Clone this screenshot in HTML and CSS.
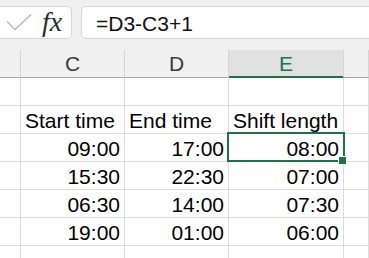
FILE: index.html
```html
<!DOCTYPE html>
<html lang="en">
<head>
    <meta charset="UTF-8">
    <meta name="viewport" content="width=device-width, initial-scale=1.0">
    <title>Shift length</title>
    <link rel="stylesheet" href="styles.css">
</head>
<body>

    <!-- Formula bar -->
    <div class="toolbar">
        <div class="fx-box">
            <svg class="check" width="28" height="20" viewBox="0 0 28 20">
                <path d="M1 7.5 L9 15.5 L25 0.5" fill="none" stroke="#b8b8b8" stroke-width="1.4"/>
            </svg>
            <span class="fx">fx</span>
        </div>
        <div class="formula">=D3-C3+1</div>
    </div>

    <!-- Sheet -->
    <div class="sheet">
        <div class="head"></div>
        <div class="head">C</div>
        <div class="head">D</div>
        <div class="head active">E</div>
        <div class="head"></div>

        <div class="cell"></div><div class="cell"></div><div class="cell"></div><div class="cell"></div><div class="cell"></div>

        <div class="cell"></div>
        <div class="cell">Start time</div>
        <div class="cell">End time</div>
        <div class="cell">Shift length</div>
        <div class="cell"></div>

        <div class="cell"></div>
        <div class="cell num">09:00</div>
        <div class="cell num">17:00</div>
        <div class="cell num selected">08:00</div>
        <div class="cell"></div>

        <div class="cell"></div>
        <div class="cell num">15:30</div>
        <div class="cell num">22:30</div>
        <div class="cell num">07:00</div>
        <div class="cell"></div>

        <div class="cell"></div>
        <div class="cell num">06:30</div>
        <div class="cell num">14:00</div>
        <div class="cell num">07:30</div>
        <div class="cell"></div>

        <div class="cell"></div>
        <div class="cell num">19:00</div>
        <div class="cell num">01:00</div>
        <div class="cell num">06:00</div>
        <div class="cell"></div>

        <div class="cell last"></div><div class="cell last"></div><div class="cell last"></div><div class="cell last"></div><div class="cell last"></div>
    </div>

</body>
</html>
```

FILE: styles.css
```css
/* Global */
* {
    margin: 0;
    padding: 0;
    box-sizing: border-box;
}

body {
    width: 369px;
    height: 258px;
    overflow: hidden;
    background: #fff;
    font-family: "Liberation Sans", Arial, sans-serif;
    font-size: 21px;
    color: #000;
}

/* Formula bar */
.toolbar {
    height: 50px;
    background: #f0f0f0;
    display: flex;
    padding-top: 6px;
    gap: 9px;
}

.fx-box {
    width: 82px;
    height: 33px;
    margin-left: -10px;
    background: #fff;
    border: 1px solid #d6d6d6;
    border-radius: 5px;
    display: flex;
    align-items: center;
    padding-left: 15px;
}

.check {
    margin-top: 2px;
}

.fx {
    font-family: "Liberation Serif", "DejaVu Serif", serif;
    font-style: italic;
    font-size: 28px;
    line-height: 28px;
    color: #2b2b2b;
    margin-left: 8px;
    margin-top: -2px;
}

.formula {
    flex: 1;
    height: 33px;
    margin-right: -10px;
    background: #fff;
    border: 1px solid #d6d6d6;
    border-radius: 5px;
    padding: 5px 0 0 14px;
    line-height: 24px;
    color: #111;
}

/* Sheet grid */
.sheet {
    display: grid;
    grid-template-columns: 21px 104px 104px 115px 1fr;
    grid-template-rows: repeat(7, 28px) 12px;
}

.head {
    background: #f0f0f0;
    border-right: 1px solid #d4d4d4;
    border-bottom: 1px solid #a8a8a8;
    color: #3a3a3a;
    text-align: center;
    line-height: 27px;
}

.head.active {
    background: #e1e1e1;
    color: #217346;
    border-bottom-color: #217346;
    box-shadow: inset 0 -1px 0 #217346;
}

.cell {
    border-right: 1px solid #dcdcdc;
    border-bottom: 1px solid #dcdcdc;
    display: flex;
    align-items: flex-end;
    line-height: 24px;
    padding: 0 4px;
    white-space: nowrap;
}

.cell.num {
    justify-content: flex-end;
}

.cell.last {
    border-bottom: none;
}

/* Active cell */
.selected {
    position: relative;
}

.selected::after {
    content: "";
    position: absolute;
    left: -2px;
    top: -2px;
    right: -2px;
    bottom: -1px;
    border: 2px solid #217346;
}

.selected::before {
    content: "";
    position: absolute;
    right: -4px;
    bottom: -4px;
    width: 7px;
    height: 7px;
    background: #217346;
    border: 1px solid #fff;
    z-index: 1;
}
```
